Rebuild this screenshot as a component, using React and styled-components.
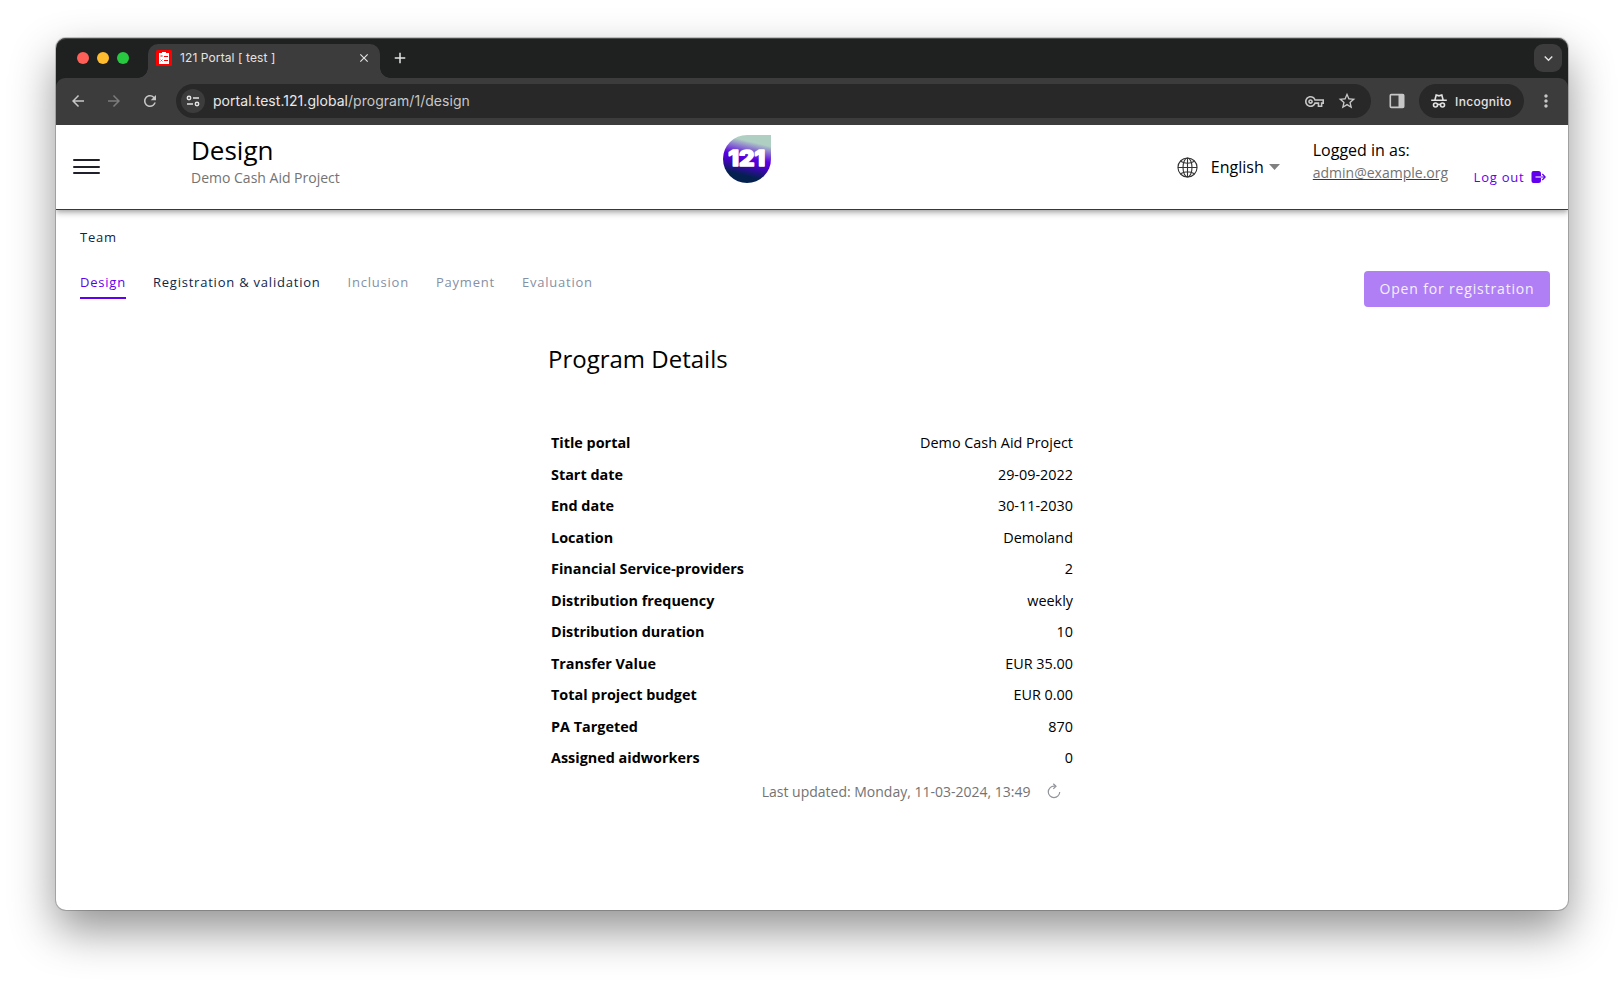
import React from 'react';
import styled, { createGlobalStyle } from 'styled-components';
import {
  MdArrowBack, MdArrowForward, MdRefresh, MdClose, MdAdd, MdStarBorder,
  MdMoreVert, MdExpandMore, MdOutlineVpnKey,
} from 'react-icons/md';

const Global = createGlobalStyle`
  * { box-sizing: border-box; }
  body { margin: 0; background: #fff; overflow: hidden; }
  button { border: 0; background: none; padding: 0; font: inherit; color: inherit; }
  svg { display: block; flex: none; }
`;

const Desktop = styled.div`
  width: 1624px;
  height: 984px;
  padding: 38px 56px 74px;
  font-family: 'Open Sans', sans-serif;
`;

const Window = styled.div`
  height: 872px;
  border-radius: 10px;
  background: #fff;
  box-shadow: 0 0 0 1px rgba(0, 0, 0, 0.2), 0 20px 45px rgba(0, 0, 0, 0.43);
`;

const Chrome = styled.div`
  border-radius: 10px 10px 0 0;
  background: #1f2120;
  box-shadow: inset 0 1px 0 #4b4c4c;
  font-family: Inter, sans-serif;
  color: #e3e3e3;
`;

const TabStrip = styled.div`
  display: flex;
  height: 40px;
  padding: 6px 6px 0 21px;
`;

const Lights = styled.div`
  display: flex;
  gap: 8px;
  padding-top: 8px;
  margin-right: 19px;
`;

const Light = styled.i`
  width: 12px;
  height: 12px;
  border-radius: 50%;
  background: ${(p) => p.$color};
`;

const Tab = styled.div`
  position: relative;
  display: flex;
  align-items: center;
  width: 232px;
  height: 34px;
  padding: 0 9px 6px 8px;
  border-radius: 10px 10px 0 0;
  background: #3c3c3c;
  &::before, &::after {
    content: '';
    position: absolute;
    bottom: 0;
    width: 10px;
    height: 10px;
  }
  &::before { left: -10px; background: radial-gradient(circle at 0 0, transparent 9.5px, #3c3c3c 10px); }
  &::after { right: -10px; background: radial-gradient(circle at 100% 0, transparent 9.5px, #3c3c3c 10px); }
`;

const TabTitle = styled.span`
  flex: 1;
  margin-left: 8px;
  font-size: 12px;
  line-height: 16px;
  letter-spacing: 0.1px;
`;

const NewTab = styled.button`
  display: flex;
  height: 28px;
  align-items: center;
  margin-left: 11px;
`;

const TabSearch = styled.button`
  display: flex;
  align-items: center;
  justify-content: center;
  width: 28px;
  height: 28px;
  margin-left: auto;
  border-radius: 9px;
  background: #3c3c3c;
`;

const Toolbar = styled.div`
  display: flex;
  align-items: center;
  height: 47px;
  padding: 0 12px 1px 13px;
  border-radius: 9px 9px 0 0;
  background: #3c3c3c;
  color: #c7c7c7;
`;

const NavButton = styled.button`
  display: flex;
  margin-right: 18px;
  color: ${(p) => (p.$off ? '#7c7c7c' : '#c7c7c7')};
`;

const AddressBar = styled.div`
  display: flex;
  align-items: center;
  width: 1196px;
  height: 34px;
  margin: 0 18px 0 -1px;
  padding: 0 14px 0 5px;
  border-radius: 17px;
  background: #282828;
`;

const SiteInfo = styled.span`
  display: flex;
  align-items: center;
  justify-content: center;
  width: 24px;
  height: 24px;
  border-radius: 50%;
  background: #3c3c3c;
`;

const Url = styled.span`
  flex: 1;
  margin-left: 8px;
  font-size: 14px;
  line-height: 20px;
  letter-spacing: 0.04px;
  color: #c7c7c7;
  b { font-weight: 400; color: #e8e8e8; }
`;

const BarIcons = styled.span`
  display: flex;
  align-items: center;
  gap: 13px;
`;

const Incognito = styled.div`
  display: flex;
  align-items: center;
  gap: 8px;
  width: 105px;
  height: 34px;
  margin: 0 12px 0 14px;
  padding-left: 12px;
  border-radius: 17px;
  background: #282828;
  color: #e3e3e3;
  font-size: 12px;
  font-weight: 500;
  letter-spacing: 0.33px;
`;

const Header = styled.header`
  display: flex;
  height: 85px;
  padding: 0 22px 0 16.5px;
  border-bottom: 1px solid #6200ee;
  box-shadow: 0 2px 4px -1px rgba(0, 0, 0, 0.2), 0 4px 5px rgba(0, 0, 0, 0.14), 0 1px 10px rgba(0, 0, 0, 0.1);
  clip-path: inset(0 0 -16px 0);
`;

const Heading = styled.div`
  display: flex;
  width: 650.5px;
`;

const Menu = styled.button`
  display: flex;
  flex-direction: column;
  gap: 5px;
  width: 27.5px;
  margin-right: 91px;
  padding-top: 34px;
  span { height: 2px; border-radius: 1px; background: #1f2029; }
  span + span { margin-top: -0.3px; }
`;

const PageTitle = styled.h1`
  margin: 7px 0 0;
  font-size: 26px;
  line-height: 36px;
  font-weight: 400;
  color: #000;
`;

const Subtitle = styled.p`
  margin: 0;
  font-size: 14px;
  line-height: 20px;
  color: #737373;
`;

const Account = styled.div`
  display: flex;
  flex: 1;
  justify-content: flex-end;
`;

const Logo = styled.div`
  margin-top: 10px;
`;

const Language = styled.button`
  display: flex;
  align-items: center;
  height: 84px;
  margin-right: 33px;
  font-size: 16px;
  color: #000;
  svg + span { margin: 0 5px 0 13px; }
`;

const User = styled.div`
  padding-top: 14px;
  margin-right: 25.5px;
  font-size: 16px;
  line-height: 22px;
  color: #000;
`;

const Email = styled.a`
  display: block;
  margin-top: 1px;
  font-size: 14px;
  color: #737373;
  text-decoration: underline #6200ee;
`;

const Logout = styled.button`
  display: flex;
  align-items: center;
  align-self: flex-start;
  gap: 6.5px;
  margin-top: 42px;
  height: 20px;
  font-size: 13px;
  letter-spacing: 0.06em;
  color: #6200ee;
`;

const Main = styled.main`
  padding: 17px 18px 0 24px;
`;

const PhaseLink = styled.a`
  height: 27px;
  font-size: 13px;
  line-height: 20px;
  letter-spacing: 0.06em;
  color: ${(p) => (p.$off ? '#8590a2' : p.$on ? '#6200ee' : '#0f2548')};
  border-bottom: 2px solid ${(p) => (p.$on ? '#6200ee' : 'transparent')};
`;

const TeamRow = styled.div`
  display: flex;
`;

const PhaseRow = styled.div`
  display: flex;
  justify-content: space-between;
  margin-top: 17px;
`;

const Phases = styled.nav`
  display: flex;
  gap: 27px;
  padding-top: 1px;
`;

const OpenButton = styled.button`
  width: 186px;
  height: 36px;
  padding-bottom: 2px;
  border-radius: 4px;
  background: #b07ff5;
  color: #f5effe;
  font-size: 14px;
  letter-spacing: 0.06em;
`;

const Details = styled.section`
  width: 528px;
  margin: 34px 0 0 468px;
`;

const DetailsTitle = styled.h2`
  margin: 0 0 50px;
  font-size: 24px;
  line-height: 36px;
  font-weight: 400;
  color: #000;
`;

const List = styled.dl`
  margin: 0;
  padding: 0 3px;
`;

const Row = styled.div`
  display: flex;
  justify-content: space-between;
  height: 31.55px;
  font-size: 14.4px;
  line-height: 31.55px;
  color: #000;
  dt { font-weight: 700; }
  dd { margin: 0; }
`;

const Updated = styled.p`
  display: flex;
  align-items: center;
  justify-content: flex-end;
  gap: 16.5px;
  height: 34px;
  margin: 0;
  padding-right: 15px;
  font-size: 14px;
  color: #737373;
`;

const rows = [
  ['Title portal', 'Demo Cash Aid Project'],
  ['Start date', '29-09-2022'],
  ['End date', '30-11-2030'],
  ['Location', 'Demoland'],
  ['Financial Service-providers', '2'],
  ['Distribution frequency', 'weekly'],
  ['Distribution duration', '10'],
  ['Transfer Value', 'EUR 35.00'],
  ['Total project budget', 'EUR 0.00'],
  ['PA Targeted', '870'],
  ['Assigned aidworkers', '0'],
];

const Favicon = () => (
  <svg width="16" height="16" viewBox="0 0 16 16">
    <rect width="16" height="16" rx="1.5" fill="#f00" />
    <path d="M3 3h3V2h4v1h3v11H3z" fill="#fff" />
    <path d="M4.500 5l2 2m0-2l-2 2M4.500 9.500l2 2m0-2l-2 2" fill="none" stroke="#d33" strokeWidth=".7" />
    <path d="M8 6h4v1H8zM8 10h4v1H8z" fill="#f00" />
  </svg>
);

const TuneIcon = () => (
  <svg width="14" height="12" viewBox="0 0 14 12" fill="none" stroke="#e3e3e3" strokeWidth="1.5">
    <circle cx="3" cy="3" r="1.7" />
    <path d="M7 3h6M1 9h6" />
    <circle cx="11" cy="9" r="1.7" />
  </svg>
);

const PanelIcon = () => (
  <svg width="16" height="16" viewBox="0 0 16 16">
    <rect x="1.3" y="1.6" width="13.4" height="12.8" rx="1" fill="none" stroke="#c7c7c7" strokeWidth="1.6" />
    <path d="M9.500 1.500h5.500v13H9.500z" fill="#c7c7c7" />
  </svg>
);

const IncognitoIcon = () => (
  <svg width="16" height="16" viewBox="0 0 16 16" fill="none" stroke="#e3e3e3" strokeWidth="1.6">
    <path d="M.2 7.200h15.600M3.900 7l1.300-5 2.800.8 2.800-.8 1.300 5" />
    <circle cx="4.500" cy="12" r="2" />
    <circle cx="11.500" cy="12" r="2" />
    <path d="M6.500 11.700q1.500-.8 3 0" />
  </svg>
);

const GlobeIcon = () => (
  <svg width="21" height="21" viewBox="0 0 22 22" fill="none" stroke="#333" strokeWidth="1.15">
    <circle cx="11" cy="11" r="10" />
    <ellipse cx="11" cy="11" rx="4.7" ry="10" />
    <path d="M11 1v20M1 11h20M3.700 4.500q7.300 4 14.600 0M3.700 17.500q7.300-4 14.600 0" />
  </svg>
);

const LogoutIcon = () => (
  <svg width="15" height="14" viewBox="0 0 15 14" fill="none">
    <path d="M2.500 1h5A2.500 2.500 0 0 1 10 3.500v7A2.500 2.500 0 0 1 7.500 13h-5A2 2 0 0 1 .5 11V3a2 2 0 0 1 2-2z" fill="#6200ee" />
    <path d="M4.500 7H10" stroke="#fff" strokeWidth="1.1" />
    <path d="M10 7h4M11.300 4L14.200 7l-2.900 3" stroke="#6200ee" strokeWidth="1.2" />
  </svg>
);

const ReloadIcon = () => (
  <svg width="14" height="16" viewBox="0 0 14 16" fill="none" stroke="#92949c" strokeWidth="1.2">
    <path d="M8.500 3.200H7a5.700 5.700 0 1 0 5.700 5.700" />
    <path d="M6.300.7L9 3.300 6.300 5.900" />
  </svg>
);

const LogoMark = () => (
  <svg width="48" height="48" viewBox="0 0 48 48">
    <defs>
      <linearGradient id="drop" x1="0.62" y1="0" x2="0.38" y2="1">
        <stop offset="0.14" stopColor="#afcfc3" />
        <stop offset="0.46" stopColor="#5b00e0" />
        <stop offset="0.58" stopColor="#4d00cc" />
        <stop offset="0.84" stopColor="#03204f" />
      </linearGradient>
    </defs>
    <path d="M24 0h24v24A24 24 0 1 1 24 0z" fill="url(#drop)" />
    <text x="23.7" y="31.3" textAnchor="middle" fontFamily="Inter, sans-serif" fontWeight="800" fontSize="22" fill="#fff" stroke="#fff" strokeWidth="1.6" strokeLinejoin="round" textLength="37" lengthAdjust="spacingAndGlyphs">121</text>
  </svg>
);

export default function App() {
  return (
    <Desktop>
      <Global />
      <Window>
        <Chrome>
          <TabStrip>
            <Lights>
              <Light $color="#ff5f57" />
              <Light $color="#febc2e" />
              <Light $color="#28c840" />
            </Lights>
            <Tab>
              <Favicon />
              <TabTitle>121 Portal [ test ]</TabTitle>
              <MdClose size={14} />
            </Tab>
            <NewTab><MdAdd size={18} /></NewTab>
            <TabSearch><MdExpandMore size={17} /></TabSearch>
          </TabStrip>
          <Toolbar>
            <NavButton><MdArrowBack size={18} /></NavButton>
            <NavButton $off><MdArrowForward size={18} /></NavButton>
            <NavButton><MdRefresh size={18} /></NavButton>
            <AddressBar>
              <SiteInfo><TuneIcon /></SiteInfo>
              <Url><b>portal.test.121.global</b>/program/1/design</Url>
              <BarIcons>
                <MdOutlineVpnKey size={19} />
                <MdStarBorder size={20} />
              </BarIcons>
            </AddressBar>
            <PanelIcon />
            <Incognito><IncognitoIcon />Incognito</Incognito>
            <MdMoreVert size={20} />
          </Toolbar>
        </Chrome>
        <Header>
          <Heading>
            <Menu aria-label="Menu"><span /><span /><span /></Menu>
            <div>
              <PageTitle>Design</PageTitle>
              <Subtitle>Demo Cash Aid Project</Subtitle>
            </div>
          </Heading>
          <Logo><LogoMark /></Logo>
          <Account>
            <Language>
              <GlobeIcon />
              <span>English</span>
              <svg width="11" height="6" viewBox="0 0 11 6"><path d="M0 0h11L5.500 6z" fill="#808080" /></svg>
            </Language>
            <User>
              Logged in as:
              <Email>admin@example.org</Email>
            </User>
            <Logout>Log out<LogoutIcon /></Logout>
          </Account>
        </Header>
        <Main>
          <TeamRow><PhaseLink>Team</PhaseLink></TeamRow>
          <PhaseRow>
            <Phases>
              <PhaseLink $on>Design</PhaseLink>
              <PhaseLink>Registration &amp; validation</PhaseLink>
              <PhaseLink $off>Inclusion</PhaseLink>
              <PhaseLink $off>Payment</PhaseLink>
              <PhaseLink $off>Evaluation</PhaseLink>
            </Phases>
            <OpenButton>Open for registration</OpenButton>
          </PhaseRow>
          <Details>
            <DetailsTitle>Program Details</DetailsTitle>
            <List>
              {rows.map(([label, value]) => (
                <Row key={label}><dt>{label}</dt><dd>{value}</dd></Row>
              ))}
            </List>
            <Updated>Last updated: Monday, 11-03-2024, 13:49<ReloadIcon /></Updated>
          </Details>
        </Main>
      </Window>
    </Desktop>
  );
}
